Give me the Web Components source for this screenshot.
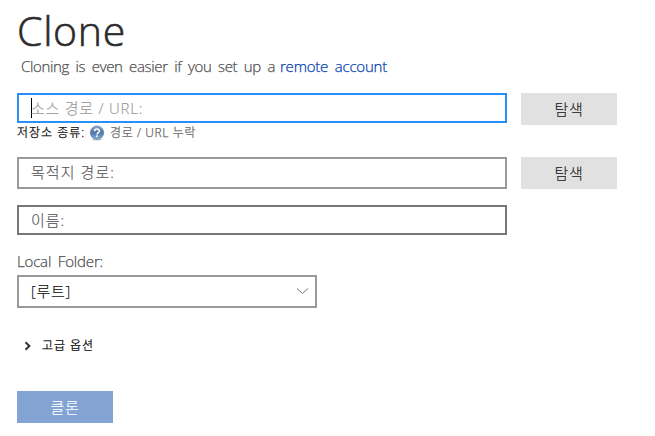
<!DOCTYPE html>
<html lang="ko">
<head>
<meta charset="utf-8">
<title>Clone</title>
<style>
html,body{margin:0;background:#fff}
body{width:655px;height:436px;overflow:hidden;font-family:"Open Sans","Noto Sans CJK KR",sans-serif;font-size:15px;color:#333}
</style>
</head>
<body>
<clone-page></clone-page>
<script>
// Text run whose letter spacing is adjusted to fill the width given in "w".
class FitText extends HTMLElement{
  connectedCallback(){
    const r=this.attachShadow({mode:'open'});
    r.innerHTML='<style>:host{display:inline-block;white-space:nowrap;flex:none}span{display:inline-block}</style><span><slot></slot></span>';
    const w=+this.getAttribute('w');
    if(w){
      const s=r.querySelector('span');
      const n=[...this.textContent].length;
      s.style.letterSpacing=((w-s.getBoundingClientRect().width)/n)+'px';
    }
  }
}
class PathField extends HTMLElement{
  connectedCallback(){
    this.attachShadow({mode:'open'}).innerHTML=`<style>
:host{display:flex;align-items:center;box-sizing:border-box;width:490px;height:var(--h,32px);border:2px solid var(--line,#999);padding:0 12px var(--drop,2px);background:#fff;color:var(--ink,#555);line-height:20px}
i{width:1px;height:20px;background:#000;margin-right:-1px;display:none}
:host([focused]) i{display:block}
</style><i></i><slot></slot>`;
  }
}
class PushButton extends HTMLElement{
  connectedCallback(){
    this.attachShadow({mode:'open'}).innerHTML=`<style>
:host{display:flex;align-items:center;justify-content:center;box-sizing:border-box;width:96px;height:32px;background:#e1e1e1;color:#222;line-height:20px}
:host([primary]){background:#83a3d3;color:#fff}
</style><slot></slot>`;
  }
}
class FolderSelect extends HTMLElement{
  connectedCallback(){
    this.attachShadow({mode:'open'}).innerHTML=`<style>
:host{display:flex;align-items:center;justify-content:space-between;box-sizing:border-box;width:300px;height:33px;border:2px solid #999;padding:0 6px 1px 12px;color:#111;line-height:20px}
svg{display:block;margin-top:1px}
</style><slot></slot><svg width="13" height="9" viewBox="0 0 13 9" fill="none" stroke="#777" stroke-width="1"><path d="M1 1.5 6.5 6.5 12 1.5"/></svg>`;
  }
}
class HelpBadge extends HTMLElement{
  connectedCallback(){
    this.attachShadow({mode:'open'}).innerHTML=`<style>:host,svg{display:block}</style>
<svg width="16" height="16" viewBox="0 0 16 16"><defs><linearGradient id="g" x2="0" y2="1"><stop stop-color="#8aa9cd"/><stop offset=".5" stop-color="#4d76a8"/><stop offset="1" stop-color="#8db5da"/></linearGradient></defs>
<ellipse cx="8" cy="14.6" rx="5" ry="1" fill="#ccc"/><circle cx="8" cy="7.7" r="6.7" fill="url(#g)" stroke="#5d7ea5" stroke-width=".7"/>
<path d="M5.6 6.2C5.6 3.5 10.4 3.4 10.4 6 10.4 7.6 8 7.6 8 9.4" fill="none" stroke="#fff" stroke-width="1.5"/><rect x="7.2" y="10.4" width="1.6" height="1.6" fill="#fff"/></svg>`;
  }
}
class ClonePage extends HTMLElement{
  connectedCallback(){
    this.attachShadow({mode:'open'}).innerHTML=`<style>
:host{display:flex;flex-direction:column;align-items:flex-start;box-sizing:border-box;width:655px;height:436px;padding-left:17px;font-weight:300;-webkit-text-stroke:.15px}
h1{margin:0;height:56px;line-height:60px;font-size:41px;font-weight:300;color:#2b2b2b;-webkit-text-stroke:.6px #2b2b2b}
.sub{height:37px;line-height:20px;padding-left:4px;color:#505050;display:flex;white-space:pre;word-spacing:3px;-webkit-text-stroke:.25px}
.sub a{color:#003eb0}
.row{display:flex;gap:14px;align-items:flex-start}
.kind{display:flex;height:34px;line-height:19px;font-size:12px;color:#000;-webkit-text-stroke:.25px}
.kind help-badge{margin:2px 5px 0 4px}
.kind .state{color:#666}
.name{margin:16px 0}
.label{height:24px;line-height:20px;color:#505050;word-spacing:3px;-webkit-text-stroke:.25px}
.more{display:flex;align-items:center;height:20px;margin:27px 0 36px 7px;font-size:12px;gap:10px;color:#000;-webkit-text-stroke:.25px}
.more svg{display:block;margin-top:2px}
</style>
<h1><fit-text w="109">Clone</fit-text></h1>
<div class="sub"><fit-text w="254">Cloning is even easier if you set up a</fit-text><a style="padding-left:5px"><fit-text w="107">remote account</fit-text></a></div>
<div class="row" style="height:30px"><path-field focused style="--h:30px;--line:#2a8ff7;--ink:#999;--drop:1px"><fit-text w="112">소스 경로 / URL:</fit-text></path-field><push-button><fit-text w="29">탐색</fit-text></push-button></div>
<div class="kind"><fit-text w="68">저장소 종류:</fit-text><help-badge></help-badge><fit-text class="state" w="86">경로 / URL 누락</fit-text></div>
<div class="row"><path-field><fit-text w="84">목적지 경로:</fit-text></path-field><push-button><fit-text w="29">탐색</fit-text></push-button></div>
<path-field class="name" style="--h:30px;--line:#777;--drop:1px"><fit-text w="34">이름:</fit-text></path-field>
<div class="label"><fit-text w="86">Local Folder:</fit-text></div>
<folder-select><fit-text w="40">[루트]</fit-text></folder-select>
<div class="more"><svg width="8" height="10" viewBox="0 0 8 10" fill="none" stroke="#333" stroke-width="2"><path d="M1.5 1.2 5.4 5 1.5 8.8"/></svg><fit-text w="52">고급 옵션</fit-text></div>
<push-button primary><fit-text w="29">클론</fit-text></push-button>`;
  }
}
customElements.define('fit-text',FitText);
customElements.define('path-field',PathField);
customElements.define('push-button',PushButton);
customElements.define('folder-select',FolderSelect);
customElements.define('help-badge',HelpBadge);
customElements.define('clone-page',ClonePage);
</script>
</body>
</html>
